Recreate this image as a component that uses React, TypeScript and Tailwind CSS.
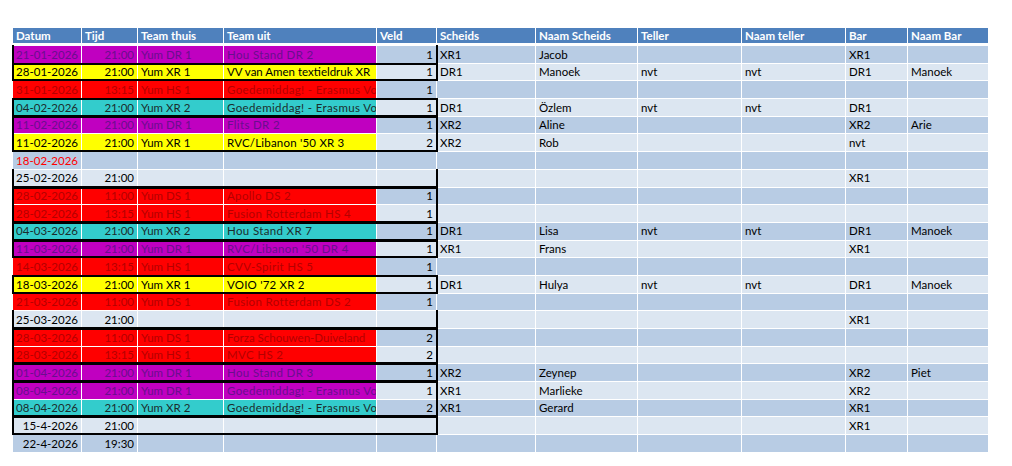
import React from "react";

type Fill = "purple" | "yellow" | "red" | "teal";

type Row = {
  d: string;
  t?: string;
  home?: string;
  away?: string;
  veld?: string;
  sch?: string;
  naamSch?: string;
  teller?: string;
  naamTel?: string;
  bar?: string;
  naamBar?: string;
  fill?: Fill;
  redDate?: boolean;
  tight?: boolean; // long team name, no extra letter spacing
  box?: string; // which thick black sides: t, l, r, b
};

const fills: Record<Fill, string> = {
  purple: "bg-[#c000c0] text-[#6a0e8e]",
  yellow: "bg-[#ffff00] text-black",
  red: "bg-[#ff0000] text-[#b40000]",
  teal: "bg-[#33cccc] text-[#1c2c2c]",
};

const rows: Row[] = [
  { d: "21-01-2026", t: "21:00", home: "Yum DR 1", away: "Hou Stand DR 2", veld: "1", sch: "XR1", naamSch: "Jacob", bar: "XR1", fill: "purple", box: "lr" },
  { d: "28-01-2026", t: "21:00", home: "Yum XR 1", away: "VV van Amen textieldruk XR", veld: "1", sch: "DR1", naamSch: "Manoek", teller: "nvt", naamTel: "nvt", bar: "DR1", naamBar: "Manoek", fill: "yellow", tight: true, box: "tlrb" },
  { d: "31-01-2026", t: "13:15", home: "Yum HS 1", away: "Goedemiddag! - Erasmus Vo", veld: "1", fill: "red" },
  { d: "04-02-2026", t: "21:00", home: "Yum XR 2", away: "Goedemiddag! - Erasmus Vo", veld: "1", sch: "DR1", naamSch: "Özlem", teller: "nvt", naamTel: "nvt", bar: "DR1", fill: "teal", box: "tlrb" },
  { d: "11-02-2026", t: "21:00", home: "Yum DR 1", away: "Flits DR 2", veld: "1", sch: "XR2", naamSch: "Aline", bar: "XR2", naamBar: "Arie", fill: "purple", box: "tlr" },
  { d: "11-02-2026", t: "21:00", home: "Yum XR 1", away: "RVC/Libanon '50 XR 3", veld: "2", sch: "XR2", naamSch: "Rob", bar: "nvt", fill: "yellow", box: "lrb" },
  { d: "18-02-2026", redDate: true },
  { d: "25-02-2026", t: "21:00", bar: "XR1", box: "lrb" },
  { d: "28-02-2026", t: "11:00", home: "Yum DS 1", away: "Apollo DS 2", veld: "1", fill: "red", box: "tlr" },
  { d: "28-02-2026", t: "13:15", home: "Yum HS 1", away: "Fusion Rotterdam HS 4", veld: "1", fill: "red", box: "lrb" },
  { d: "04-03-2026", t: "21:00", home: "Yum XR 2", away: "Hou Stand XR 7", veld: "1", sch: "DR1", naamSch: "Lisa", teller: "nvt", naamTel: "nvt", bar: "DR1", naamBar: "Manoek", fill: "teal", box: "tlrb" },
  { d: "11-03-2026", t: "21:00", home: "Yum DR 1", away: "RVC/Libanon '50 DR 4", veld: "1", sch: "XR1", naamSch: "Frans", bar: "XR1", fill: "purple", box: "tlrb" },
  { d: "14-03-2026", t: "13:15", home: "Yum HS 1", away: "CVV-Spirit HS 5", veld: "1", fill: "red" },
  { d: "18-03-2026", t: "21:00", home: "Yum XR 1", away: "VOIO '72 XR 2", veld: "1", sch: "DR1", naamSch: "Hulya", teller: "nvt", naamTel: "nvt", bar: "DR1", naamBar: "Manoek", fill: "yellow", box: "tlrb" },
  { d: "21-03-2026", t: "11:00", home: "Yum DS 1", away: "Fusion Rotterdam DS 2", veld: "1", fill: "red" },
  { d: "25-03-2026", t: "21:00", bar: "XR1", box: "lrb" },
  { d: "28-03-2026", t: "11:00", home: "Yum DS 1", away: "Forza Schouwen-Duiveland", veld: "2", fill: "red", tight: true, box: "tlr" },
  { d: "28-03-2026", t: "13:15", home: "Yum HS 1", away: "MVC HS 2", veld: "2", fill: "red", box: "lrb" },
  { d: "01-04-2026", t: "21:00", home: "Yum DR 1", away: "Hou Stand DR 3", veld: "1", sch: "XR2", naamSch: "Zeynep", bar: "XR2", naamBar: "Piet", fill: "purple", box: "tlrb" },
  { d: "08-04-2026", t: "21:00", home: "Yum DR 1", away: "Goedemiddag! - Erasmus Vo", veld: "1", sch: "XR1", naamSch: "Marlieke", bar: "XR2", fill: "purple", box: "tlr" },
  { d: "08-04-2026", t: "21:00", home: "Yum XR 2", away: "Goedemiddag! - Erasmus Vo", veld: "2", sch: "XR1", naamSch: "Gerard", bar: "XR1", fill: "teal", box: "lrb" },
  { d: "15-4-2026", t: "21:00", bar: "XR1", box: "tlrb" },
  { d: "22-4-2026", t: "19:30" },
];

const headers = ["Datum", "Tijd", "Team thuis", "Team uit", "Veld", "Scheids", "Naam Scheids", "Teller", "Naam teller", "Bar", "Naam Bar"];

const gridCols = "grid grid-cols-[68px_55px_85px_152px_59px_98px_101px_103px_103px_61px_80px] gap-x-px";

function Cell({ children, className = "", right = false }: { children?: React.ReactNode; className?: string; right?: boolean }) {
  return (
    <div
      className={`flex items-center overflow-hidden whitespace-nowrap px-[3px] ${right ? "justify-end" : ""} ${className}`}
    >
      {children}
    </div>
  );
}

export default function App() {
  return (
    <div className="h-[466px] w-[1012px] bg-white pl-[13px] pt-[28px] font-['Lato',sans-serif] text-[11.5px] leading-none text-black">
      <div className={`${gridCols} h-[15px] bg-white`}>
        {headers.map((h) => (
          <div key={h} className="flex items-center bg-[#4f81bd] px-[3px] font-bold text-white">
            {h}
          </div>
        ))}
      </div>

      <div className="mt-[3px] flex flex-col gap-y-px">
        {rows.map((r, i) => {
          const band = i % 2 === 0 ? "bg-[#b8cce4]" : "bg-[#dce6f1]";
          const lead = r.fill ? fills[r.fill] : band;
          const box = r.box ?? "";
          const track = r.fill && !r.tight ? (r.fill === "yellow" ? "tracking-[0.2px]" : "tracking-[0.35px]") : "";
          return (
            <div key={i} className={`relative ${gridCols} h-[16.7px]`}>
              <Cell right className={`${lead} ${r.redDate ? "text-[#ff0000]" : ""}`}>{r.d}</Cell>
              <Cell right className={lead}>{r.t}</Cell>
              <Cell className={lead}>{r.home}</Cell>
              <Cell className={`${lead} ${track}`}>{r.away}</Cell>
              <Cell right className={band}>{r.veld}</Cell>
              <Cell className={band}>{r.sch}</Cell>
              <Cell className={band}>{r.naamSch}</Cell>
              <Cell className={band}>{r.teller}</Cell>
              <Cell className={band}>{r.naamTel}</Cell>
              <Cell className={band}>{r.bar}</Cell>
              <Cell className={band}>{r.naamBar}</Cell>
              {box ? (
                <div
                  className={`pointer-events-none absolute left-[-1px] top-[-1px] bottom-[-1px] w-[426px] border-black ${
                    box.includes("t") ? "border-t-2" : ""
                  } ${box.includes("b") ? "border-b-2" : ""} ${box.includes("l") ? "border-l-2" : ""} ${
                    box.includes("r") ? "border-r-2" : ""
                  }`}
                />
              ) : null}
            </div>
          );
        })}
      </div>
    </div>
  );
}
